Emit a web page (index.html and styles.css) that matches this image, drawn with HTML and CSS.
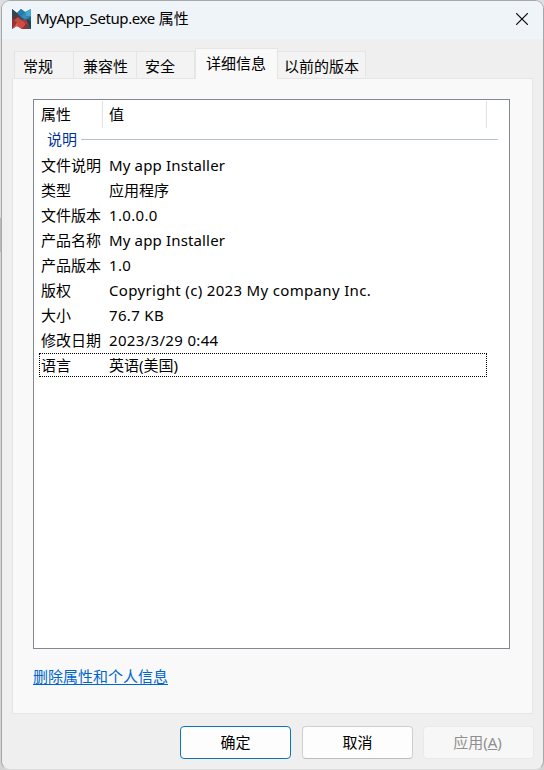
FILE: index.html
```html
<!DOCTYPE html>
<html lang="zh-CN">
<head>
<meta charset="utf-8">
<title>MyApp_Setup.exe 属性</title>
<link rel="stylesheet" href="styles.css">
</head>
<body>
<main class="window">
  <header class="titlebar">
    <svg class="app-icon" width="20" height="21" viewBox="0 0 20 21">
      <path fill="#29566d" d="M0 0l5 4 4-4 4 3 6-3v20h-9l-5-3-5 3z"/>
      <path fill="#314650" d="M0 0l6 5-6 6z"/>
      <path fill="#247fae" d="M5 4l4-4 4 3-4 5z"/>
      <path fill="#43a9d3" d="M13 3l6-3v8l-5-1z"/>
      <path fill="#318fbd" d="M9 8l4-5 1 4 4 1-4 3z"/>
      <path fill="#17658b" d="M14 11l5-4v6z"/>
      <path fill="#603437" d="M0 9l5-4 4 5-5 2z"/>
      <path fill="#c64b42" d="M0 13l6-5 4 4-5 4z"/>
      <path fill="#973334" d="M0 9v11l5-6z"/>
      <path fill="#df5f52" d="M0 20l5-6 4 2-4 1z"/>
      <path fill="#d54b40" d="M5 16l5-5 4 4-4 5-5-3z"/>
      <path fill="#ae393a" d="M10 11l4-1 3 7-3-2z"/>
      <path fill="#8e3336" d="M10 20l4-5 3 5z"/>
      <path fill="#283f4e" d="M14 10l5 2v8z"/>
    </svg>
    <h1 class="title"><span class="title-name">MyApp_Setup.exe</span> 属性</h1>
    <svg class="close" width="12" height="12" viewBox="0 0 12 12"><path d="M.6.6l10.8 10.8M11.4.6L.6 11.4" fill="none" stroke="#111" stroke-width="1.3" stroke-linecap="round"/></svg>
  </header>
  <nav class="tabs">
    <div class="tab tab-general">常规</div>
    <div class="tab tab-compat">兼容性</div>
    <div class="tab tab-security">安全</div>
    <div class="tab tab-details active">详细信息</div>
    <div class="tab tab-previous">以前的版本</div>
  </nav>
  <section class="panel">
    <div class="list">
      <div class="list-head"><div class="head-name">属性</div><div class="head-value">值</div></div>
      <div class="group">说明</div>
      <div class="row"><span class="name">文件说明</span><span class="product">My app Installer</span></div>
      <div class="row"><span class="name">类型</span><span>应用程序</span></div>
      <div class="row"><span class="name">文件版本</span><span class="latin">1.0.0.0</span></div>
      <div class="row"><span class="name">产品名称</span><span class="product">My app Installer</span></div>
      <div class="row"><span class="name">产品版本</span><span class="latin">1.0</span></div>
      <div class="row"><span class="name">版权</span><span class="latin">Copyright (c) 2023 My company Inc.</span></div>
      <div class="row"><span class="name">大小</span><span class="latin">76.7 KB</span></div>
      <div class="row"><span class="name">修改日期</span><span class="latin">2023/3/29 0:44</span></div>
      <div class="row focused"><span class="name">语言</span><span>英语(美国)</span></div>
    </div>
    <a class="link">删除属性和个人信息</a>
  </section>
  <footer class="buttons">
    <div class="button primary">确定</div>
    <div class="button">取消</div>
    <div class="button disabled">应用(<u>A</u>)</div>
  </footer>
</main>
</body>
</html>
```
FILE: styles.css
```css
* { box-sizing: border-box; }
body {
  margin: 0;
  height: 770px;
  overflow: hidden;
  padding-left: 1px;
  background: linear-gradient(#dedede 0 218px, #b9b9b9 218px 252px, #d4d4d4 252px);
  color: #000;
  font: 400 15px/25px "Noto Sans", "Noto Sans CJK SC", sans-serif;
  white-space: nowrap;
}
.window {
  display: flex;
  flex-direction: column;
  width: 543px;
  height: 770px;
  border: 1px solid #a5a7a9;
  border-bottom-color: #dcdcdc;
  border-radius: 9px;
  background: #efefef;
  overflow: hidden;
}
.titlebar {
  display: flex;
  align-items: center;
  height: 38px;
  padding: 0 15px 2px 10px;
  background: #eff4f9;
}
.title {
  flex: 1;
  margin: -2px 0 0 4px;
  font-size: 15px;
  font-weight: inherit;
}
.title-name { letter-spacing: -.4px; }
.close { display: block; }
.tabs {
  display: flex;
  align-items: flex-end;
  height: 39px;
  padding-left: 12px;
}
.tab {
  height: 27px;
  padding: 2px 0 0 8px;
  border: 1px solid #e5e5e5;
  border-width: 1px 1px 0 0;
  background: #f3f3f3;
}
.tab-general { width: 60px; border-left-width: 1px; }
.tab-compat { width: 63px; padding-left: 9px; }
.tab-security { width: 58px; }
.tab-details {
  width: 83px;
  height: 31px;
  margin-bottom: -1px;
  padding: 2px 0 0 10px;
  position: relative;
}
.tab.active { border-left-width: 1px; background: #f9f9f9; }
.tab-previous { width: 88px; padding-left: 6px; }
.panel {
  width: 521px;
  height: 636px;
  margin-left: 10px;
  padding: 20px 20px 0;
  border: 1px solid #e5e5e5;
  background: #f9f9f9;
}
.list {
  width: 477px;
  height: 550px;
  padding: 1px 22px 0 5px;
  border: 1px solid #828790;
  background: #fff;
}
.list-head {
  display: flex;
  height: 27px;
  padding-left: 2px;
  border-right: 1px solid #e2e2e2;
  line-height: 27px;
}
.head-name { width: 62px; border-right: 1px solid #e2e2e2; }
.head-value { padding-left: 6px; }
.group {
  display: flex;
  align-items: center;
  gap: 4px;
  height: 25px;
  margin: -1px -11px 1px 8px;
  color: #003399;
}
.group::after {
  content: "";
  flex: 1;
  height: 1px;
  background: #b5bfd0;
}
.row {
  display: flex;
  height: 25px;
  padding-left: 2px;
}
.name { width: 68px; }
.product { letter-spacing: .15px; }
.latin { letter-spacing: .33px; }
.focused {
  height: 24px;
  padding-left: 1px;
  border: 1px dotted #000;
  line-height: 23px;
}
.link {
  display: block;
  margin-top: 15px;
  color: #0066cc;
  text-decoration: underline;
  text-underline-offset: 2px;
}
.buttons {
  display: flex;
  gap: 11px;
  padding: 12px 0 0 178px;
}
.button {
  width: 111px;
  height: 33px;
  border: 1px solid #cfcfcf;
  border-bottom-color: #bdbdbd;
  border-radius: 4px;
  background: #fdfdfd;
  line-height: 31px;
  text-align: center;
}
.primary { border-color: #0f73bd; }
.disabled {
  margin-left: -1px;
  padding-right: 2px;
  border-color: #e9e9e9;
  background: #f7f7f7;
  color: #8f8f8f;
}
```
